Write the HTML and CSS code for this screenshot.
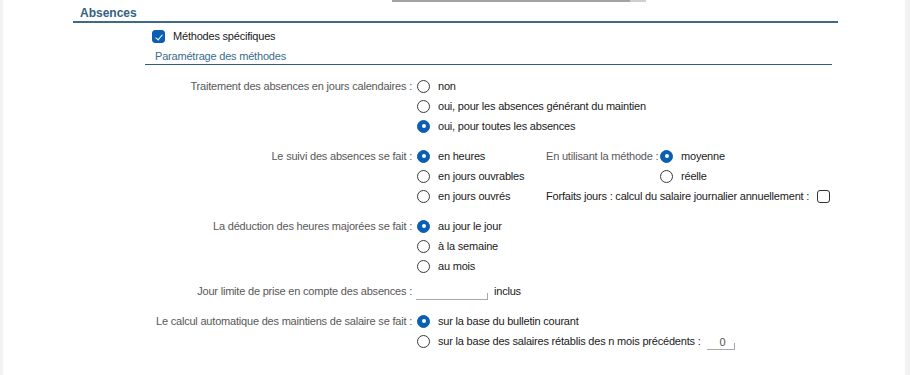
FILE: index.html
```html
<!DOCTYPE html>
<html lang="fr">
<head>
  <meta charset="UTF-8" />
  <title>Absences</title>
  <link rel="stylesheet" href="styles.css">
</head>
<body>
  <div class="page">
    <!-- champ du bloc précédent -->
    <div class="prev-field">
      <span class="prev-input"></span>
      <span class="prev-btn"></span>
    </div>

    <h2 class="section-title">Absences</h2>

    <label class="check-row">
      <span class="check checked"></span>
      Méthodes spécifiques
    </label>

    <h3 class="sub-title">Paramétrage des méthodes</h3>

    <div class="field">
      <div class="field-label">Traitement des absences en jours calendaires :</div>
      <div class="options">
        <div class="opt"><span class="radio"></span>non</div>
        <div class="opt"><span class="radio"></span>oui, pour les absences générant du maintien</div>
        <div class="opt"><span class="radio checked"></span>oui, pour toutes les absences</div>
      </div>
    </div>

    <div class="field">
      <div class="field-label">Le suivi des absences se fait :</div>
      <div class="options split">
        <div class="opt"><span class="radio checked"></span>en heures</div>
        <div class="inner-label">En utilisant la méthode :</div>
        <div class="opt"><span class="radio checked"></span>moyenne</div>

        <div class="opt"><span class="radio"></span>en jours ouvrables</div>
        <div class="opt col-3"><span class="radio"></span>réelle</div>

        <div class="opt"><span class="radio"></span>en jours ouvrés</div>
        <div class="opt span-2">Forfaits jours : calcul du salaire journalier annuellement :<span class="check"></span></div>
      </div>
    </div>

    <div class="field">
      <div class="field-label">La déduction des heures majorées se fait :</div>
      <div class="options">
        <div class="opt"><span class="radio checked"></span>au jour le jour</div>
        <div class="opt"><span class="radio"></span>à la semaine</div>
        <div class="opt"><span class="radio"></span>au mois</div>
      </div>
    </div>

    <div class="field short">
      <div class="field-label">Jour limite de prise en compte des absences :</div>
      <div class="opt input-row"><span class="text-box day-box"></span>inclus</div>
    </div>

    <div class="field">
      <div class="field-label">Le calcul automatique des maintiens de salaire se fait :</div>
      <div class="options">
        <div class="opt"><span class="radio checked"></span>sur la base du bulletin courant</div>
        <div class="opt"><span class="radio"></span>sur la base des salaires rétablis des n mois précédents :<span class="text-box num-box">0</span></div>
      </div>
    </div>
  </div>
</body>
</html>
```

FILE: styles.css
```css
* {
  box-sizing: border-box;
  margin: 0;
  padding: 0;
}

body {
  background: #f3f3f3;
  font-family: 'Liberation Sans', Arial, sans-serif;
  font-size: 11px;
  letter-spacing: -0.2px;
  color: #1a1a1a;
}

.page {
  margin: 0 5px 0 3px;
  background: #fff;
  min-height: 375px;
}

/* champ du bloc précédent, coupé en haut */
.prev-field {
  display: flex;
  margin-left: 389px;
  height: 2px;
}

.prev-input {
  width: 238px;
  border-bottom: 2px solid #a3a3a3;
}

.prev-btn {
  width: 16px;
  border-bottom: 2px solid #cfcfcf;
}

.section-title {
  margin: 2px 0 0 70px;
  width: 765px;
  padding: 2px 0 0 7px;
  font-size: 12px;
  font-weight: bold;
  letter-spacing: 0;
  line-height: 15px;
  color: #33627f;
  border-bottom: 2px solid #3f6a85;
}

.check-row {
  display: flex;
  align-items: center;
  gap: 8px;
  height: 20px;
  margin: 3px 0 0 149px;
}

.check {
  display: inline-block;
  width: 13px;
  height: 13px;
  border: 1px solid #333;
  border-radius: 3px;
  background: #fff;
  position: relative;
  flex: none;
}

.check.checked {
  background: #0a5fb3;
  border-color: #0a5fb3;
}

.check.checked::after {
  content: '';
  position: absolute;
  left: 4px;
  top: 2px;
  width: 3px;
  height: 6px;
  border: solid #fff;
  border-width: 0 1px 1px 0;
  transform: rotate(40deg);
}

.sub-title {
  margin: 3px 0 0 142px;
  width: 687px;
  padding-left: 10px;
  font-size: 11px;
  font-weight: normal;
  line-height: 15px;
  color: #3a6c8c;
  border-bottom: 1px solid #2f5e7a;
}

.field {
  display: grid;
  grid-template-columns: 409px auto;
  column-gap: 5px;
  margin-top: 10px;
}

.sub-title + .field {
  margin-top: 11px;
}

.field.short {
  margin-top: 5px;
}

.field-label {
  text-align: right;
  line-height: 20px;
  color: #585858;
  white-space: nowrap;
}

.options {
  display: flex;
  flex-direction: column;
}

.options.split {
  display: grid;
  grid-template-columns: 129px 114px auto;
}

.inner-label {
  line-height: 20px;
  color: #585858;
  white-space: nowrap;
}

.col-3 {
  grid-column: 3;
}

.span-2 {
  grid-column: 2 / 4;
  gap: 5px;
}

.opt {
  display: flex;
  align-items: center;
  gap: 8px;
  height: 20px;
  white-space: nowrap;
}

.radio {
  display: inline-block;
  width: 13px;
  height: 13px;
  border: 1px solid #3a3a3a;
  border-radius: 50%;
  background: #fff;
  flex: none;
  position: relative;
}

.radio.checked {
  background: #0a5fb3;
  border-color: #0a5fb3;
}

.radio.checked::after {
  content: '';
  position: absolute;
  left: 3.5px;
  top: 3.5px;
  width: 4px;
  height: 4px;
  border-radius: 50%;
  background: #fff;
}

.input-row {
  gap: 6px;
  margin-left: -1px;
}

.text-box {
  display: inline-block;
  height: 15px;
  border-bottom: 1px solid #a8a8a8;
  background: linear-gradient(#a8a8a8, #a8a8a8) right bottom / 1px 6px no-repeat;
  margin-top: 3px;
  text-align: right;
  line-height: 14px;
  color: #555;
}

.day-box {
  width: 72px;
}

.num-box {
  width: 28px;
  padding-right: 9px;
  margin-left: -2px;
}
```
